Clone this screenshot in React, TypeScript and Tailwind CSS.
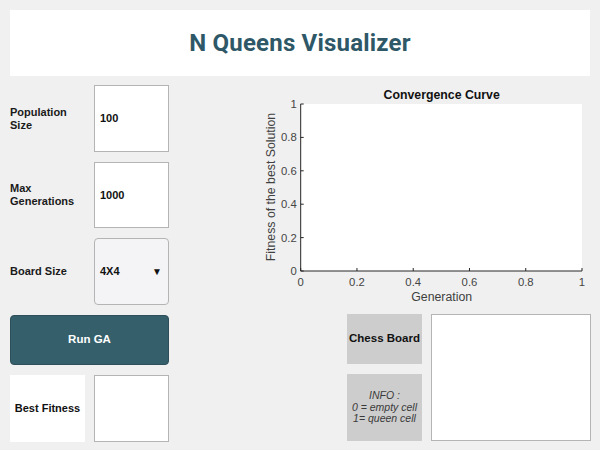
import React from "react";

const PLOT = { x0: 45.7, x1: 327, y0: 19, y1: 186 }; // coordenadas dentro del svg (origen en 255,85)

const TICKS = [0, 0.2, 0.4, 0.6, 0.8, 1];

function tickLabel(v: number): string {
  return v === 0 ? "0" : v === 1 ? "1" : v.toFixed(1);
}

function ConvergenceChart() {
  const { x0, x1, y0, y1 } = PLOT;
  const w = x1 - x0;
  const h = y1 - y0;
  return (
    <svg width={340} height={225} className="block" style={{ fontFamily: '"Liberation Sans", Arial, sans-serif' }}>
      <text x={186.7} y={14} textAnchor="middle" fontSize={12.3} fontWeight={700} fill="#111">
        Convergence Curve
      </text>
      <rect x={x0} y={y0} width={w} height={h} fill="#ffffff" />
      {/* ejes */}
      <line x1={x0} y1={y0} x2={x0} y2={y1} stroke="#262626" strokeWidth={1} />
      <line x1={x0} y1={y1} x2={x1} y2={y1} stroke="#262626" strokeWidth={1} />
      {TICKS.map((t) => {
        const ty = y1 - t * h;
        const tx = x0 + t * w;
        return (
          <g key={t}>
            <line x1={x0} y1={ty} x2={x0 + 3} y2={ty} stroke="#262626" strokeWidth={1} />
            <line x1={tx} y1={y1} x2={tx} y2={y1 - 3} stroke="#262626" strokeWidth={1} />
            <text x={x0 - 4} y={ty + 4} textAnchor="end" fontSize={11.3} fill="#454545">
              {tickLabel(t)}
            </text>
            <text x={tx} y={y1 + 15} textAnchor="middle" fontSize={11.3} fill="#454545">
              {tickLabel(t)}
            </text>
          </g>
        );
      })}
      <text x={186.7} y={216} textAnchor="middle" fontSize={12.3} fill="#404040">
        Generation
      </text>
      <text
        x={0}
        y={0}
        transform="translate(19.5 102) rotate(-90)"
        textAnchor="middle"
        fontSize={12.3}
        fill="#404040"
      >
        Fitness of the best Solution
      </text>
    </svg>
  );
}

function FieldRow({ label, children }: { label: React.ReactNode; children: React.ReactNode }) {
  return (
    <div className="flex items-center h-[67px]">
      <div className="w-[84px] text-[11px] font-bold leading-[13px] text-[#1a1a1a]">{label}</div>
      {children}
    </div>
  );
}

export default function App() {
  return (
    <div
      className="w-[600px] h-[450px] bg-[#f0f0f0] px-[10px] pt-[10px] overflow-hidden"
      style={{ fontFamily: '"Liberation Sans", Arial, sans-serif' }}
    >
      {/* ── Encabezado ── */}
      <div className="h-[66px] bg-white flex items-center justify-center">
        <h1
          className="text-[24px] font-bold text-[#2e5867] tracking-[0.2px]"
          style={{ fontFamily: "Roboto, 'Liberation Sans', sans-serif" }}
        >
          N Queens Visualizer
        </h1>
      </div>

      <div className="flex mt-[9px]">
        {/* ── Columna de parámetros ── */}
        <div className="w-[159px] flex flex-col gap-[10px]">
          <FieldRow label={<>Population<br />Size</>}>
            <div className="w-[75px] h-[67px] bg-white border border-[#b4b4b4] flex items-center pl-[5px] text-[11px] font-bold text-[#111]">
              100
            </div>
          </FieldRow>
          <div className="flex items-center h-[66px]">
            <div className="w-[84px] text-[11px] font-bold leading-[13px] text-[#1a1a1a]">
              Max<br />Generations
            </div>
            <div className="w-[75px] h-[66px] bg-white border border-[#b4b4b4] flex items-center pl-[5px] text-[11px] font-bold text-[#111]">
              1000
            </div>
          </div>
          <FieldRow label="Board Size">
            <div className="w-[75px] h-[67px] bg-[#f4f4f6] border border-[#b4b4b4] rounded-[4px] flex items-center justify-between pl-[5px] pr-[6px] text-[11px] font-bold text-[#111]">
              <span>4X4</span>
              <span className="text-[10px]">▼</span>
            </div>
          </FieldRow>
          <button className="h-[50px] w-[159px] rounded-[4px] bg-[#355f6b] border border-[#2c4f5a] text-white text-[11.5px] font-bold">
            Run GA
          </button>
          <div className="flex h-[67px] gap-[9px]">
            <div className="w-[75px] bg-white flex items-center justify-center text-[11px] font-bold text-[#111]">
              Best Fitness
            </div>
            <div className="w-[75px] bg-white border border-[#b4b4b4]" />
          </div>
        </div>

        {/* ── Gráfica y tablero ── */}
        <div className="flex-1 flex flex-col">
          <div className="ml-[86px]">
            <ConvergenceChart />
          </div>
          <div className="ml-[178px] mt-[4px] flex gap-[9px]">
            <div className="w-[75px] flex flex-col gap-[10px]">
              <div className="h-[50px] bg-[#cdcdcd] flex items-center justify-center text-[11.5px] font-bold text-[#111]">
                Chess Board
              </div>
              <div className="h-[67px] bg-[#cdcdcd] flex flex-col items-center justify-center text-[10.5px] italic leading-[11.5px] text-[#3a3a3a]">
                <span>INFO :</span>
                <span>0 = empty cell</span>
                <span>1= queen cell</span>
              </div>
            </div>
            <div className="w-[160px] h-[127px] bg-white border border-[#b4b4b4]" />
          </div>
        </div>
      </div>
    </div>
  );
}
